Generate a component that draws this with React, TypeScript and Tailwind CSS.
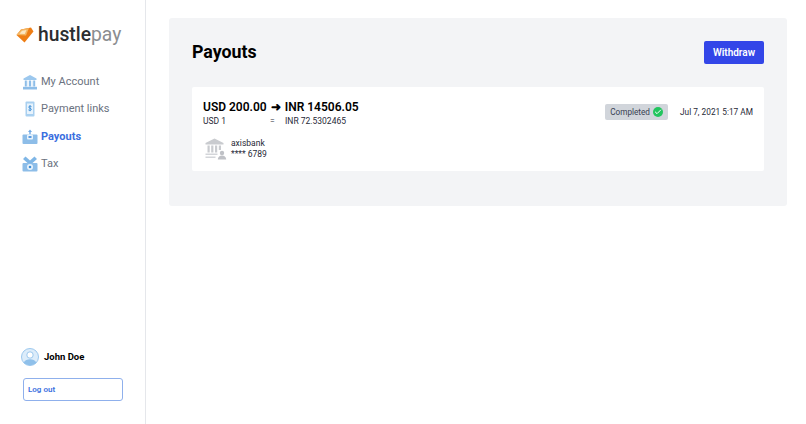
import { Check } from 'lucide-react'

function Logo() {
  return (
    <svg width="18" height="16" viewBox="0 0 18 16" className="shrink-0">
      <path d="M0.500 8 L5 2.500 L15 0.500 L17.500 4.500 L8.500 15.500 Z" fill="#ee7d14" />
      <path d="M0.500 8 L5 2.500 L13 1 L10 8.500 Z" fill="#f3b562" />
      <path d="M3.500 6.800 L6 3.800 L10.500 3 L8.800 7 Z" fill="#fbe6c4" />
    </svg>
  )
}

function BankIcon() {
  return (
    <svg width="16" height="16" viewBox="0 0 16 16" className="shrink-0">
      <path d="M8 1 L14.500 4.500 V6 H1.500 V4.500 Z" fill="#9cc8ee" />
      <path d="M2.800 6.500h2v6h-2zM7 6.500h2v6H7zM11.200 6.500h2v6h-2z" fill="#8dbde8" />
      <path d="M5.300 6.500h1.200v6H5.300zM9.500 6.500h1.200v6H9.500z" fill="#dcecfa" />
      <path d="M1 12.800h14V15.500H1z" fill="#8dbde8" />
    </svg>
  )
}

function LinkIcon() {
  return (
    <svg width="16" height="16" viewBox="0 0 16 16" className="shrink-0">
      <rect x="3.500" y="0.500" width="9" height="15" rx="1" fill="#a9d0f0" />
      <rect x="5" y="2.500" width="6" height="10.500" fill="#e8f3fc" />
      <path d="M9.500 5.600c-.5-.6-2.800-.8-2.800.5 0 1.400 2.700.9 2.700 2.300 0 1.300-2.400 1.100-3 .5M8 4.200v6" stroke="#3f8fd6" strokeWidth="0.900" fill="none" />
    </svg>
  )
}

function PayoutIcon() {
  return (
    <svg width="16" height="16" viewBox="0 0 16 16" className="shrink-0">
      <path d="M8 0.500 L10 3 H8.700 V5.500 H7.300 V3 H6 Z" fill="#6fa8e4" />
      <rect x="0.500" y="5.500" width="15" height="9.500" rx="1" fill="#8dbde8" />
      <rect x="5" y="5.500" width="6" height="5" rx="1" fill="#e8f3fc" />
      <rect x="6.500" y="7" width="3" height="2" fill="#5c9be0" />
    </svg>
  )
}

function TaxIcon() {
  return (
    <svg width="16" height="16" viewBox="0 0 16 16" className="shrink-0">
      <path d="M3.500 0.500 L8 4.500 L12.500 0.500 L15 3 L10.500 7 H5.500 L1 3 Z" fill="#7fb6e6" />
      <rect x="0.500" y="7" width="15" height="8.500" rx="1" fill="#8dbde8" />
      <circle cx="8" cy="11" r="3" fill="#e8f3fc" />
      <circle cx="8" cy="11" r="1.300" fill="#3f8fd6" />
    </svg>
  )
}

function BankGrey() {
  return (
    <svg width="22" height="22" viewBox="0 0 22 22" className="shrink-0">
      <path d="M9.500 0.500 L18.500 5 V6.500 H0.500 V5 Z" fill="#c9cbcf" />
      <path d="M2.500 7.500h2.200v7H2.500zM6.200 7.500h2.200v7H6.200zM10 7.500h2.200v7H10zM13.800 7.500h2.200v4.500h-2.200z" fill="#c9cbcf" />
      <path d="M0.500 15.500h12V17H.5zM0.500 18.500h10V20H.5z" fill="#d3d5d9" />
      <circle cx="17" cy="15" r="2.200" fill="#bfc1c6" />
      <path d="M12.800 21.500c0-5.400 8.400-5.400 8.400 0z" fill="#bfc1c6" />
    </svg>
  )
}

function Avatar() {
  return (
    <svg width="18" height="18" viewBox="0 0 18 18" className="shrink-0">
      <circle cx="9" cy="9" r="8.500" fill="#dcecfa" stroke="#9cc8ee" />
      <circle cx="9" cy="7" r="3.200" fill="#ffffff" stroke="#9cc8ee" />
      <path d="M2.800 14.500c2-4.200 10.400-4.200 12.400 0C13 18 5 18 2.800 14.500z" fill="#8fc0ea" />
    </svg>
  )
}

export default function App() {
  const nav = [
    { label: 'My Account', icon: <BankIcon /> },
    { label: 'Payment links', icon: <LinkIcon /> },
    { label: 'Payouts', icon: <PayoutIcon />, active: true },
    { label: 'Tax', icon: <TaxIcon /> },
  ]

  return (
    <div className="flex h-[424px] w-[806px] overflow-hidden bg-white font-['Roboto','Liberation_Sans',sans-serif] text-black">
      <aside className="flex h-full w-[146px] shrink-0 flex-col border-r border-[#e5e7eb]">
        <div className="flex items-center gap-[4px] pl-[16px] pt-[25px]">
          <Logo />
          <span className="text-[19.300px] leading-[20px] font-medium text-[#2b2d30]">
            hustle<span className="font-normal text-[#8b8d90]">pay</span>
          </span>
        </div>
        <nav className="mt-[29px] flex flex-col gap-[11px] pl-[22px]">
          {nav.map((item) => (
            <div key={item.label} className="flex h-[16.300px] items-center gap-[3px]">
              {item.icon}
              <span className={item.active ? 'text-[11px] font-bold text-[#3b6fe0]' : 'text-[11px] text-[#6b7280]'}>
                {item.label}
              </span>
            </div>
          ))}
        </nav>
        <div className="mt-auto pb-[23px] pl-[21px]">
          <div className="flex items-center gap-[5px]">
            <Avatar />
            <span className="text-[9.500px] font-bold text-black">John Doe</span>
          </div>
          <button className="ml-[2px] mt-[12px] flex h-[23px] w-[100px] items-center rounded-[3px] border border-[#8fb0ec] pl-[4px] text-[8px] font-semibold text-[#3b6fe0]">
            Log out
          </button>
        </div>
      </aside>
      <main className="flex-1 pl-[23px] pr-[19px] pt-[18px]">
        <section className="h-[188px] rounded-[3px] bg-[#f3f4f6] px-[23px] pt-[23px]">
          <div className="flex h-[23px] items-center justify-between">
            <h1 className="text-[17.800px] font-bold text-black">Payouts</h1>
            <button className="h-[23px] w-[60px] rounded-[2px] bg-[#3346e8] text-[10px] font-semibold text-white">
              Withdraw
            </button>
          </div>
          <div className="mt-[23px] flex h-[84px] justify-between rounded-[2px] bg-white pl-[11px] pr-[11px] pt-[12px]">
            <div>
              <div className="flex items-center text-[12px] leading-[16px] font-semibold text-black">
                <span>USD 200.00</span>
                <span className="mx-[4px]">➜</span>
                <span>INR 14506.05</span>
              </div>
              <div className="flex text-[8.500px] leading-[12px] text-[#1f2937]">
                <span className="w-[67px]">USD 1</span>
                <span className="w-[15px]">=</span>
                <span>INR 72.5302465</span>
              </div>
              <div className="ml-[2px] mt-[11px] flex items-center gap-[4px]">
                <BankGrey />
                <div className="text-[8.500px] leading-[11px] text-[#1f2937]">
                  <div>axisbank</div>
                  <div>**** 6789</div>
                </div>
              </div>
            </div>
            <div className="mt-[5px] flex h-[16px] items-center gap-[12px]">
              <span className="flex h-[16px] items-center gap-[3px] rounded-[2px] bg-[#d1d5db] px-[5px] text-[8.200px] text-[#374151]">
                Completed
                <span className="flex h-[10px] w-[10px] items-center justify-center rounded-full bg-[#22c55e]">
                  <Check size={8} color="#ffffff" strokeWidth={3} />
                </span>
              </span>
              <span className="text-[8.300px] text-[#1f2937]">Jul 7, 2021 5:17 AM</span>
            </div>
          </div>
        </section>
      </main>
    </div>
  )
}
